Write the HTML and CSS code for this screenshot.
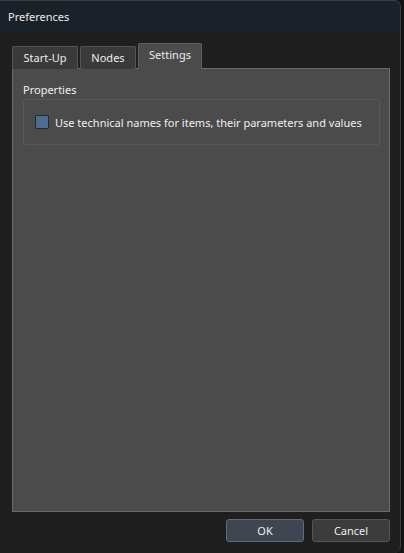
FILE: index.html
```html
<!DOCTYPE html>
<html>
<head>
<meta charset="utf-8">
<link rel="stylesheet" href="styles.css">
</head>
<body>
<div class="dialog">
  <div class="titlebar">Preferences</div>
  <div class="content">
    <div class="tabs">
      <div class="tab">Start-Up</div>
      <div class="tab">Nodes</div>
      <div class="tab active">Settings</div>
    </div>
    <div class="panel">
      <div class="section-label">Properties</div>
      <div class="group">
        <label class="check-row">
          <span class="checkbox"></span>
          <span class="check-text">Use technical names for items, their parameters and values</span>
        </label>
      </div>
    </div>
    <div class="buttons">
      <button class="btn default">OK</button>
      <button class="btn">Cancel</button>
    </div>
  </div>
</div>
</body>
</html>
```
FILE: styles.css
```css
html, body {
  margin: 0;
  padding: 0;
  background: #141414;
  width: 404px;
  height: 553px;
  overflow: hidden;
  font-family: "Noto Sans", "Open Sans", sans-serif;
  font-size: 11px;
  color: #e6e6e6;
}

.dialog {
  width: 401px;
  height: 553px;
  box-sizing: border-box;
  background: #1f1f1f;
  border-top: 1px solid #3b3f44;
  border-right: 1px solid #3b3f44;
  border-top-right-radius: 7px;
  border-bottom-right-radius: 7px;
  display: flex;
  flex-direction: column;
  overflow: hidden;
}

.titlebar {
  height: 31px;
  background: #1b2129;
  padding-left: 8px;
  display: flex;
  align-items: center;
  font-size: 11px;
  color: #ececec;
  flex-shrink: 0;
}

.content {
  flex: 1;
  display: flex;
  flex-direction: column;
  padding: 11px 10px 11px 12px;
}

.tabs {
  display: flex;
  align-items: flex-end;
  gap: 2px;
  height: 26px;
  margin-bottom: -1px;
  position: relative;
  z-index: 1;
}

.tab {
  height: 23px;
  box-sizing: border-box;
  padding: 0 0 1px 0;
  display: flex;
  align-items: center;
  justify-content: center;
  background: #3a3a3a;
  border: 1px solid #555;
  border-bottom: none;
  border-radius: 2px 2px 0 0;
  color: #ececec;
  white-space: nowrap;
}

.tab:first-child { width: 66px; }
.tab:nth-child(2) { width: 56px; }

.tab.active {
  height: 26px;
  width: 64px;
  padding: 0 0 4px 0;
  background: #4b4b4b;
  border-color: #5f5f5f;
}

.panel {
  flex: 1;
  background: #4b4b4b;
  border: 1px solid #6a6a6a;
  padding: 12px 9px 0 10px;
  display: flex;
  flex-direction: column;
}

.section-label {
  height: 18px;
  line-height: 18px;
  color: #f0f0f0;
}

.group {
  height: 46px;
  box-sizing: border-box;
  border: 1px solid #575757;
  border-radius: 2px;
  display: flex;
  align-items: center;
  padding-left: 11px;
}

.check-row {
  display: flex;
  align-items: center;
  gap: 6px;
  white-space: nowrap;
}

.checkbox {
  width: 12px;
  height: 12px;
  background: #4e6d8e;
  border: 1px solid #222a33;
  border-radius: 1px;
}

.check-text {
  color: #f0f0f0;
}

.buttons {
  display: flex;
  justify-content: flex-end;
  gap: 8px;
  padding-top: 7px;
}

.btn {
  width: 78px;
  height: 23px;
  box-sizing: border-box;
  background: #3c3c3c;
  border: 1px solid #555;
  border-radius: 3px;
  color: #eeeeee;
  font-family: "Noto Sans", "Open Sans", sans-serif;
  font-size: 11px;
  padding: 0;
}

.btn.default {
  background: #3f4652;
  border-color: #5c6b80;
}
```
